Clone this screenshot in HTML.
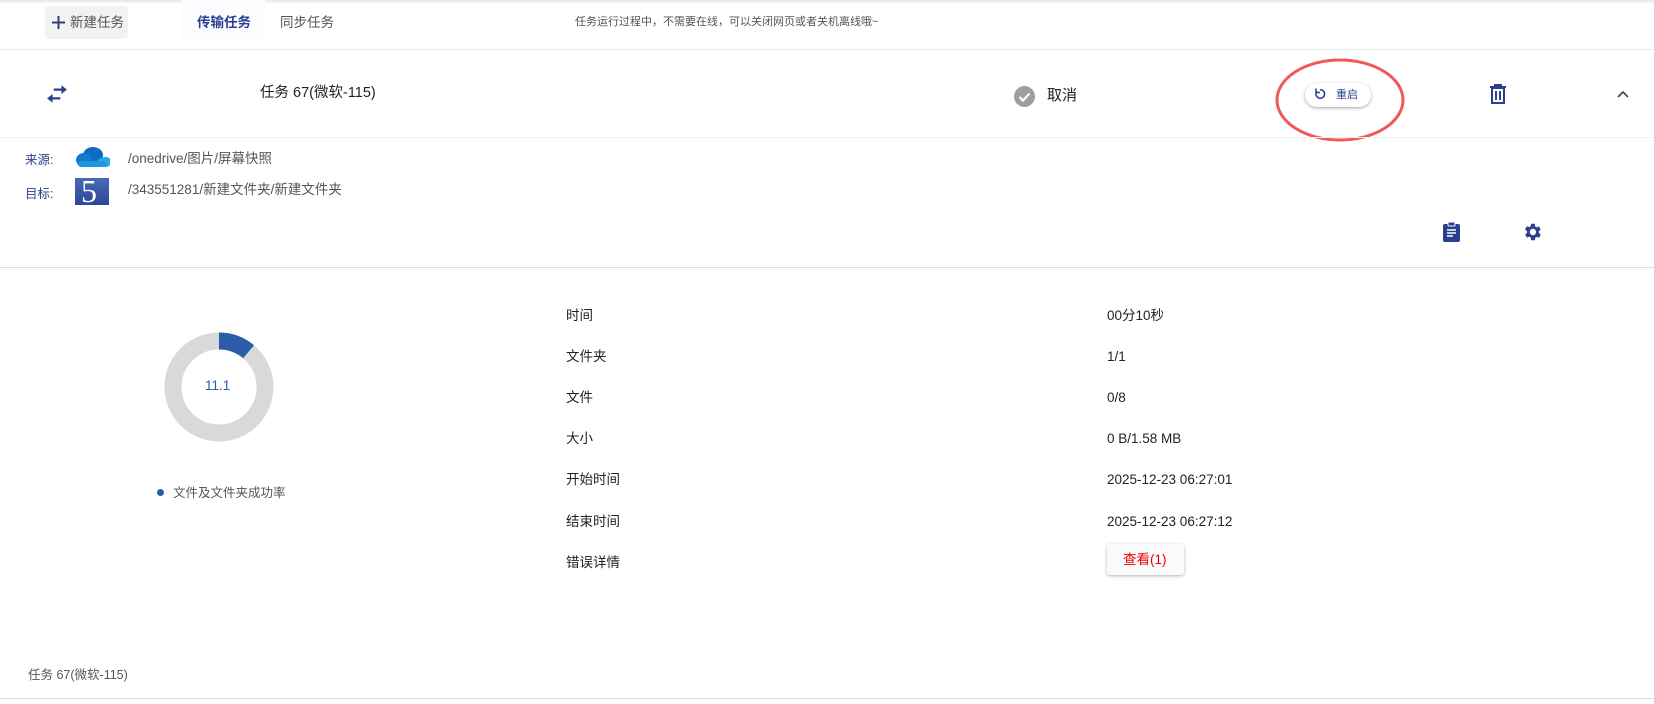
<!DOCTYPE html>
<html><head><meta charset="utf-8"><style>
*{margin:0;padding:0;box-sizing:border-box}
body{width:1654px;height:704px;background:#fff;font-family:"Liberation Sans","Noto Sans CJK SC",sans-serif;color:#222;position:relative;overflow:hidden}
.a{position:absolute;white-space:nowrap;line-height:18px}
.lbl{font-size:13.5px;color:#222}
</style></head><body>
<div class="a" style="left:0;top:0;width:1654px;height:4px;background:linear-gradient(#e6e6e6,#fff)"></div>
<div class="a" style="left:0;top:49px;width:1654px;height:1px;background:#e8e8e8"></div>
<div class="a" style="left:45px;top:6px;width:83px;height:33px;background:#f2f2f2;border-radius:4px"></div>
<svg class="a" style="left:52px;top:16px" width="13" height="13"><path d="M6.5 0v13M0 6.5h13" stroke="#34406a" stroke-width="2"/></svg>
<div class="a" style="left:70px;top:14px;font-size:13.5px;color:#555">新建任务</div>
<div class="a" style="left:182px;top:0;width:83px;height:41px;background:#fbfcfe"></div>
<div class="a" style="left:197px;top:14px;font-size:13.5px;color:#2b3f8f;font-weight:bold">传输任务</div>
<div class="a" style="left:280px;top:14px;font-size:13.5px;color:#555">同步任务</div>
<div class="a" style="left:575px;top:13px;font-size:11px;color:#555">任务运行过程中，不需要在线，可以关闭网页或者关机离线哦~</div>

<svg class="a" style="left:43px;top:83px" width="28" height="22" viewBox="0 0 24 20"><path d="M16 2l5 4-5 4V7H9V5h7zM8 10v3h7v2H8v3l-5-4z" fill="#2b3f8f"/></svg>
<div class="a" style="left:260px;top:84px;font-size:14.5px;color:#222">任务 67(微软-115)</div>
<svg class="a" style="left:1014px;top:86px" width="21" height="21"><circle cx="10.5" cy="10.5" r="10.5" fill="#9e9e9e"/><path d="M5.5 11l3.5 3.5 6.5-7" stroke="#fff" stroke-width="2.2" fill="none"/></svg>
<div class="a" style="left:1047px;top:87px;font-size:15px;color:#222">取消</div>
<div class="a" style="left:1305px;top:83px;width:66px;height:24px;background:#fff;border-radius:12px;box-shadow:0 1px 3px rgba(0,0,0,.35)"></div>
<svg class="a" style="left:1313px;top:87px" width="14" height="14" viewBox="0 0 14 14"><path d="M4 4.2A4.3 4.3 0 1 0 7 2.7" stroke="#2b3f8f" stroke-width="1.5" fill="none"/><path d="M3 1.5v4h4" stroke="#2b3f8f" stroke-width="1.5" fill="none"/></svg>
<div class="a" style="left:1336px;top:86px;font-size:11px;color:#2b3f8f">重启</div>
<svg class="a" style="left:1270px;top:56px" width="140" height="90"><ellipse cx="70" cy="44" rx="63" ry="40" stroke="#f0585a" stroke-width="3" fill="none"/></svg>
<svg class="a" style="left:1489px;top:84px" width="18" height="20" viewBox="0 0 18 20"><path d="M1 3h16M6 3V1h6v2M3 4h12v15H3z" stroke="#2b3f8f" stroke-width="2" fill="none"/><path d="M7 7v9M11 7v9" stroke="#2b3f8f" stroke-width="2"/></svg>
<svg class="a" style="left:1616px;top:89px" width="14" height="10"><path d="M2 8l5-5 5 5" stroke="#444" stroke-width="1.6" fill="none"/></svg>
<div class="a" style="left:0;top:137px;width:1654px;height:1px;background:#f0f0f0"></div>

<div class="a lbl" style="left:25px;top:151px;color:#2b3f8f;font-size:12.5px">来源:</div>
<svg class="a" style="left:75px;top:146px" width="35" height="22" viewBox="0 0 35 22"><ellipse cx="18" cy="9" rx="10" ry="8" fill="#0f6cbd"/><ellipse cx="9" cy="14" rx="8" ry="7" fill="#1478cc"/><path d="M10 21h22a5 5 0 0 0-2-10c-5 0-8 4-10 6z" fill="#28a8ea"/><rect x="3" y="15" width="28" height="6" rx="3" fill="#1f95de"/></svg>
<div class="a" style="left:128px;top:150px;font-size:13.5px;color:#555">/onedrive/图片/屏幕快照</div>
<div class="a lbl" style="left:25px;top:185px;color:#2b3f8f;font-size:12.5px">目标:</div>
<div class="a" style="left:75px;top:178px;width:34px;height:27px;background:linear-gradient(#4a6ab8,#2b4694)"></div>
<div class="a" style="left:81px;top:176px;font-family:'Liberation Serif',serif;font-size:32px;line-height:30px;color:#fff">5</div>
<div class="a" style="left:128px;top:181px;font-size:13.5px;color:#555">/343551281/新建文件夹/新建文件夹</div>
<svg class="a" style="left:1442px;top:221px" width="19" height="21" viewBox="0 0 19 21"><rect x="1" y="3" width="17" height="18" rx="2" fill="#2b3f8f"/><rect x="6" y="1" width="7" height="4" rx="1" fill="#2b3f8f" stroke="#fff" stroke-width="1"/><path d="M5 9h9M5 12h9M5 15h6" stroke="#fff" stroke-width="1.5"/></svg>
<svg class="a" style="left:1521px;top:221px" width="22" height="22" viewBox="0 0 24 24"><path fill="#2b3f8f" d="M19.4 13a7.5 7.5 0 0 0 0-2l2.1-1.6-2-3.5-2.5 1a7 7 0 0 0-1.7-1L15 3h-4l-.4 2.7a7 7 0 0 0-1.7 1l-2.5-1-2 3.5L6.6 11a7.5 7.5 0 0 0 0 2l-2.1 1.6 2 3.5 2.5-1a7 7 0 0 0 1.7 1L11 21h4l.4-2.7a7 7 0 0 0 1.7-1l2.5 1 2-3.5zM13 15.5a3.5 3.5 0 1 1 0-7 3.5 3.5 0 0 1 0 7z"/></svg>
<div class="a" style="left:0;top:267px;width:1654px;height:1px;background:#ddd"></div>

<svg class="a" style="left:163px;top:331px" width="112" height="112" viewBox="0 0 112 112"><circle cx="56" cy="56" r="46" stroke="#d9d9d9" stroke-width="17" fill="none"/><circle cx="56" cy="56" r="46" stroke="#2a5ca8" stroke-width="17" fill="none" stroke-dasharray="32.1 400" transform="rotate(-90 56 56)"/></svg>
<div class="a" style="left:205px;top:377px;font-size:13.5px;color:#2a5ca8">11.1</div>
<div class="a" style="left:157px;top:489px;width:7px;height:7px;border-radius:50%;background:#2a5ca8"></div>
<div class="a" style="left:173px;top:484px;font-size:12.5px;color:#555">文件及文件夹成功率</div>

<div class="a lbl" style="left:566px;top:307px">时间</div><div class="a lbl" style="left:1107px;top:307px">00分10秒</div>
<div class="a lbl" style="left:566px;top:348px">文件夹</div><div class="a lbl" style="left:1107px;top:348px">1/1</div>
<div class="a lbl" style="left:566px;top:389px">文件</div><div class="a lbl" style="left:1107px;top:389px">0/8</div>
<div class="a lbl" style="left:566px;top:430px">大小</div><div class="a lbl" style="left:1107px;top:430px">0 B/1.58 MB</div>
<div class="a lbl" style="left:566px;top:471px">开始时间</div><div class="a lbl" style="left:1107px;top:471px">2025-12-23 06:27:01</div>
<div class="a lbl" style="left:566px;top:513px">结束时间</div><div class="a lbl" style="left:1107px;top:513px">2025-12-23 06:27:12</div>
<div class="a lbl" style="left:566px;top:554px">错误详情</div>
<div class="a" style="left:1107px;top:544px;width:77px;height:31px;background:#fafafa;border-radius:3px;box-shadow:0 1px 3px rgba(0,0,0,.3)"></div>
<div class="a" style="left:1123px;top:551px;font-size:13.5px;color:#e00">查看(1)</div>

<div class="a" style="left:28px;top:666px;font-size:12.5px;color:#555">任务 67(微软-115)</div>
<div class="a" style="left:0;top:698px;width:1654px;height:1px;background:#ddd"></div>
</body></html>
